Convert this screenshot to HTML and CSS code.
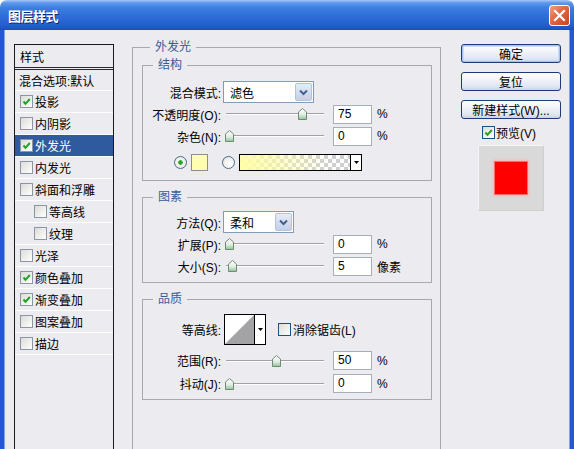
FILE: index.html
```html
<!DOCTYPE html>
<html lang="zh-CN">
<head>
<meta charset="utf-8">
<title>图层样式</title>
<link rel="stylesheet" href="styles.css">
</head>
<body>
<div class="window">
  <div class="titlebar">
    <span class="title">图层样式</span>
    <span class="close"><svg width="13" height="13" viewBox="0 0 13 13"><path d="M2 2 L11 11 M11 2 L2 11" stroke="#fff" stroke-width="2.2" stroke-linecap="square"/></svg></span>
  </div>
  <div class="client">
    <div class="stylelist">
      <div class="li head">样式</div>
      <div class="li blend">混合选项:默认</div>
      <div class="li"><span class="cb on"></span>投影</div>
      <div class="li"><span class="cb"></span>内阴影</div>
      <div class="li sel"><span class="cb on"></span>外发光</div>
      <div class="li"><span class="cb"></span>内发光</div>
      <div class="li"><span class="cb"></span>斜面和浮雕</div>
      <div class="li sub"><span class="cb"></span>等高线</div>
      <div class="li sub"><span class="cb"></span>纹理</div>
      <div class="li"><span class="cb"></span>光泽</div>
      <div class="li"><span class="cb on"></span>颜色叠加</div>
      <div class="li"><span class="cb on"></span>渐变叠加</div>
      <div class="li"><span class="cb"></span>图案叠加</div>
      <div class="li"><span class="cb"></span>描边</div>
      <div class="li empty"></div>
    </div>

    <div class="group outer">
      <div class="legend">外发光</div>

      <div class="group inner g-struct">
        <div class="legend">结构</div>
        <div class="row r-drop">
          <span class="lbl">混合模式:</span>
          <span class="select w-blend"><span class="sel-text">滤色</span><span class="sel-btn"><svg width="9" height="7" viewBox="0 0 9 7"><path d="M1 1.5 L4.5 5 L8 1.5" fill="none" stroke="#4a5f88" stroke-width="2"/></svg></span></span>
        </div>
        <div class="row">
          <span class="lbl">不透明度(O):</span>
          <span class="slider"><span class="track"></span><span class="thumb" style="left:76px"></span></span>
          <span class="num">75</span><span class="unit">%</span>
        </div>
        <div class="row">
          <span class="lbl">杂色(N):</span>
          <span class="slider"><span class="track"></span><span class="thumb" style="left:3px"></span></span>
          <span class="num">0</span><span class="unit">%</span>
        </div>
        <div class="row r-color">
          <span class="radio on"></span>
          <span class="swatch"></span>
          <span class="radio r2"></span>
          <span class="grad"><span class="grad-fill"></span><span class="grad-btn"></span></span>
        </div>
      </div>

      <div class="group inner g-elem">
        <div class="legend">图素</div>
        <div class="row r-drop">
          <span class="lbl">方法(Q):</span>
          <span class="select w-method"><span class="sel-text">柔和</span><span class="sel-btn"><svg width="9" height="7" viewBox="0 0 9 7"><path d="M1 1.5 L4.5 5 L8 1.5" fill="none" stroke="#4a5f88" stroke-width="2"/></svg></span></span>
        </div>
        <div class="row">
          <span class="lbl">扩展(P):</span>
          <span class="slider"><span class="track"></span><span class="thumb" style="left:3px"></span></span>
          <span class="num">0</span><span class="unit">%</span>
        </div>
        <div class="row">
          <span class="lbl">大小(S):</span>
          <span class="slider"><span class="track"></span><span class="thumb" style="left:6px"></span></span>
          <span class="num">5</span><span class="unit">像素</span>
        </div>
      </div>

      <div class="group inner g-qual">
        <div class="legend">品质</div>
        <div class="row r-contour">
          <span class="lbl">等高线:</span>
          <span class="contour"><svg class="curve" width="29" height="29" viewBox="0 0 29 29"><polygon points="0,29 29,0 29,29" fill="#a3a3a6"/></svg><span class="contour-btn"></span></span>
          <span class="cb plain"></span><span class="cb-text">消除锯齿(L)</span>
        </div>
        <div class="row r-q1">
          <span class="lbl">范围(R):</span>
          <span class="slider"><span class="track"></span><span class="thumb" style="left:50px"></span></span>
          <span class="num">50</span><span class="unit">%</span>
        </div>
        <div class="row r-q2">
          <span class="lbl">抖动(J):</span>
          <span class="slider"><span class="track"></span><span class="thumb" style="left:3px"></span></span>
          <span class="num">0</span><span class="unit">%</span>
        </div>
      </div>
    </div>

    <div class="side">
      <div class="btn default">确定</div>
      <div class="btn">复位</div>
      <div class="btn">新建样式(W)...</div>
      <div class="preview-check"><span class="cb plain on"></span>预览(V)</div>
      <div class="preview"><span class="swatch-red"></span></div>
    </div>
  </div>
</div>
</body>
</html>
```

FILE: styles.css
```css
* { box-sizing: border-box; }
html, body { margin: 0; padding: 0; background: #fff; }
body {
  font-family: "Liberation Sans", "Noto Sans CJK SC", sans-serif;
  font-size: 12px;
  color: #000;
}
.window {
  width: 574px;
  height: 449px;
  overflow: hidden;
  display: flex;
  flex-direction: column;
}
.titlebar {
  height: 30px;
  flex: none;
  border-radius: 7px 7px 0 0;
  background: linear-gradient(to bottom, #a6c6f6 0, #5b98ec 3px, #3c7ee2 8px, #2f6ed8 16px, #2660d0 24px, #1f52c2 29px, #1a48b4 30px);
  display: flex;
  align-items: center;
  padding: 0 4px 0 8px;
}
.title {
  flex: 1;
  color: #fff;
  font-family: "Noto Sans CJK SC", sans-serif;
  font-weight: bold;
  font-size: 13px;
  letter-spacing: -0.5px;
  text-shadow: 1px 1px 0 #0b2a7a;
  padding-top: 1px;
}
.close {
  width: 21px;
  height: 21px;
  border: 1px solid #fff;
  border-radius: 3px;
  background: linear-gradient(135deg, #f0a286 0%, #e26b48 40%, #c9441f 100%);
  display: flex;
  align-items: center;
  justify-content: center;
  margin-top: 1px;
}
.client {
  flex: 1;
  display: flex;
  align-items: flex-start;
  background: #ecebf0;
  border-left: 4px solid #2457d4;
  border-right: 4px solid #2457d4;
  box-shadow: inset 1px 0 0 #7ea2e8, inset -1px 0 0 #7ea2e8;
  padding-left: 10px;
}

/* style list */
.stylelist {
  margin-top: 14px;
  width: 100px;
  height: 420px;
  border: 1px solid #1a1a1a;
  flex: none;
}
.li {
  height: 22px;
  display: flex;
  align-items: center;
  padding-left: 5px;
  border-bottom: 1px solid #ffffff;
  white-space: nowrap;
}
.li.head {
  height: 25px;
  border-bottom: 3px double #2a2a2a;
  padding-left: 5px;
}
.li.blend { height: 21px; padding-left: 4px; }
.li.sub { padding-left: 19px; }
.li.sel { background: #2f5a9e; color: #fff; }
.li.empty { border-bottom: none; }

.cb {
  width: 13px;
  height: 13px;
  flex: none;
  border: 1px solid #8c96a4;
  background: linear-gradient(135deg, #dcdcd6 0%, #f4f4f2 70%, #fff 100%);
  margin-right: 2px;
  display: inline-block;
}
.cb.plain { border-color: #1c5180; }
.cb.on {
  background:
    url("data:image/svg+xml;utf8,<svg xmlns='http://www.w3.org/2000/svg' width='11' height='11'><path d='M2.5 5.5 L4.5 7.8 L8.8 3' fill='none' stroke='%2321a121' stroke-width='2'/></svg>") no-repeat center,
    linear-gradient(135deg, #dcdcd6 0%, #f4f4f2 70%, #fff 100%);
}

/* group boxes */
.group {
  border: 1px solid #a9a9ad;
}
.legend {
  width: fit-content;
  height: 14px;
  line-height: 14px;
  margin: -8px 0 -6px 8px;
  padding: 0 5px;
  background: #ecebf0;
  color: #3a5a94;
}
.outer {
  margin-top: 17px;
  margin-left: 18px;
  width: 309px;
  height: 440px;
  padding: 0 8px 0 9px;
  flex: none;
}
.inner { width: 290px; }
.inner .legend { margin-left: 10px; }
.g-struct { margin-top: 17px; padding-bottom: 7px; }
.g-struct > .row:nth-child(2) { margin-top: 15px; }
.g-elem { margin-top: 16px; padding-bottom: 5px; }
.g-elem > .row:nth-child(2) { margin-top: 13px; }
.g-qual { margin-top: 16px; padding-bottom: 4px; }
.g-qual > .row:nth-child(2) { margin-top: 14px; }

.row {
  display: flex;
  align-items: center;
  height: 22px;
}
.lbl {
  width: 78px;
  text-align: right;
  white-space: nowrap;
  flex: none;
}
.select {
  margin-left: 2px;
  height: 22px;
  border: 1px solid #7f9db9;
  background: #fff;
  display: flex;
  align-items: center;
  padding: 1px;
}
.w-blend { width: 91px; }
.w-method { width: 71px; }
.sel-text { flex: 1; padding-left: 5px; }
.sel-btn {
  width: 17px;
  height: 18px;
  border: 1px solid #b5c2db;
  border-radius: 2px;
  background: linear-gradient(to bottom, #e6ecf8, #c2d0ec);
  display: flex;
  align-items: center;
  justify-content: center;
}

.slider {
  position: relative;
  width: 104px;
  height: 14px;
  margin-left: 1px;
  flex: none;
}
.track {
  position: absolute;
  left: 4px;
  right: 2px;
  top: 6px;
  height: 2px;
  border-top: 1px solid #a1a1a4;
  border-bottom: 1px solid #fff;
}
.thumb {
  position: absolute;
  top: 1px;
  width: 9px;
  height: 12px;
  background: url("data:image/svg+xml;utf8,<svg xmlns='http://www.w3.org/2000/svg' width='9' height='12'><defs><linearGradient id='g' x1='0' y1='0' x2='0' y2='1'><stop offset='0' stop-color='%23ffffff'/><stop offset='0.55' stop-color='%23e4ece6'/><stop offset='1' stop-color='%2389c594'/></linearGradient></defs><path d='M0.5 4 L4.5 0.5 L8.5 4 L8.5 11.5 L0.5 11.5 Z' fill='url(%23g)' stroke='%23708a76'/></svg>") no-repeat;
}
.num {
  margin-left: 7px;
  width: 39px;
  height: 19px;
  border: 1px solid #a7aeb8;
  background: #fff;
  padding-left: 4px;
  line-height: 17px;
  flex: none;
}
.unit { margin-left: 5px; }

.r-color { margin-top: 4px; }
.radio {
  width: 13px;
  height: 13px;
  border-radius: 50%;
  border: 1px solid #4a6a8a;
  background: radial-gradient(circle at 65% 65%, #fff 0, #f2f2ef 50%, #d6d6d0 100%);
  flex: none;
  margin-left: 31px;
}
.radio.on {
  background: radial-gradient(circle, #21a121 0, #2fb02f 2px, #f6f6f4 2.6px, #ececea 5px, #d6d6d0 6.5px);
}
.radio.r2 { margin-left: 14px; }
.swatch {
  width: 17px;
  height: 17px;
  margin-left: 4px;
  border: 1px solid #8d8d90;
  background: #fffeb0;
}
.grad {
  margin-left: 4px;
  width: 123px;
  height: 17px;
  border: 1px solid #000;
  display: flex;
}
.grad-fill {
  flex: 1;
  background:
    linear-gradient(to right, #fffea6 0%, rgba(255,254,166,0.6) 35%, rgba(255,254,166,0) 80%),
    repeating-conic-gradient(#cfcfcf 0 25%, #ffffff 0 50%) 0 0 / 8px 8px;
}
.grad-btn {
  width: 11px;
  border-left: 1px solid #000;
  background: #fff url("data:image/svg+xml;utf8,<svg xmlns='http://www.w3.org/2000/svg' width='5' height='3'><path d='M0 0 L5 0 L2.5 3 Z' fill='%23000'/></svg>") no-repeat center;
}

.r-contour { height: 31px; }
.contour {
  margin-left: 3px;
  width: 42px;
  height: 31px;
  border: 1px solid #000;
  background: #fff;
  display: flex;
}
.curve { display: block; flex: none; }
.contour-btn {
  flex: 1;
  border-left: 1px solid #000;
  background: #fff url("data:image/svg+xml;utf8,<svg xmlns='http://www.w3.org/2000/svg' width='5' height='3'><path d='M0 0 L5 0 L2.5 3 Z' fill='%23000'/></svg>") no-repeat center;
}
.r-contour .cb { margin-left: 12px; }
.cb-text { margin-left: 0; }
.r-q1 { margin-top: 4px; height: 23px; }
.r-q2 { height: 23px; }

/* side */
.side {
  margin-left: 20px;
  margin-top: 14px;
  width: 100px;
  display: flex;
  flex-direction: column;
  align-items: center;
  flex: none;
}
.btn {
  width: 100px;
  height: 19px;
  border: 1px solid #1d3b73;
  border-radius: 3px;
  background: linear-gradient(to bottom, #ffffff 0%, #f1f3f9 40%, #dfe5f2 80%, #c9d3ea 100%);
  display: flex;
  align-items: center;
  justify-content: center;
  margin-bottom: 9px;
  white-space: nowrap;
}
.btn.default {
  box-shadow: inset 0 0 0 1px #a8c2f0, inset 0 0 0 2px #cddcf8;
}
.preview-check {
  display: flex;
  align-items: center;
  height: 14px;
  margin-top: -3px;
  margin-left: -4px;
}
.preview-check .cb { margin-right: 1px; }
.preview {
  margin-top: 6px;
  width: 66px;
  height: 66px;
  background: #d9d9d9;
  border: 1px solid #f6f6f6;
  border-right-color: #cfcfcf;
  border-bottom-color: #cfcfcf;
  display: flex;
  align-items: center;
  justify-content: center;
}
.swatch-red {
  width: 32px;
  height: 32px;
  background: #ff0000;
  box-shadow: 0 0 0 1px #ff6a6a, 0 0 2px 2px #ffb4b4;
}
```
